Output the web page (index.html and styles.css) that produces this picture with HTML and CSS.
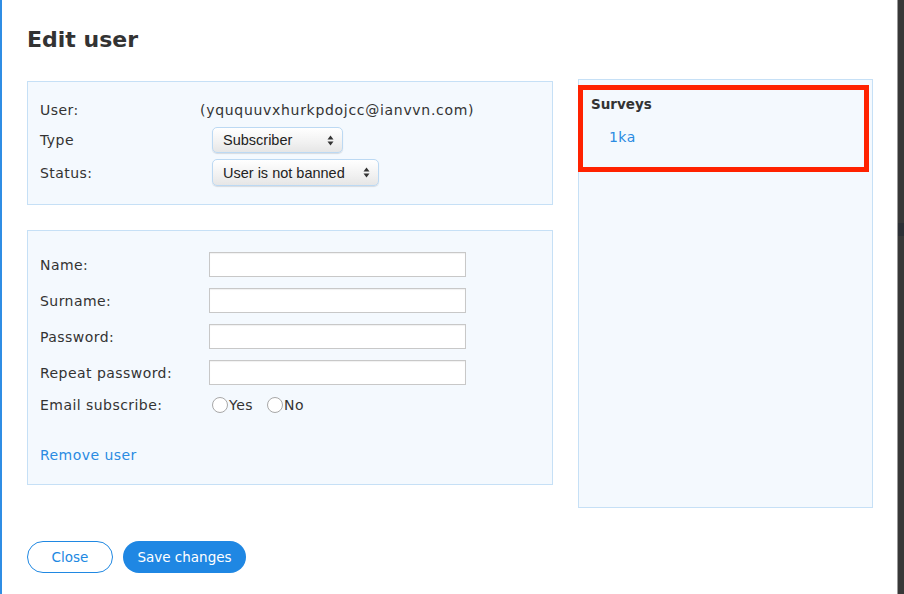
FILE: index.html
```html
<!DOCTYPE html>
<html>
<head>
<meta charset="utf-8">
<link rel="stylesheet" href="styles.css">
</head>
<body>
<div class="page">
  <div class="edge-left"></div>
  <main class="modal">
    <h1 class="title">Edit user</h1>
    <div class="columns">
      <div class="left">
        <section class="box box-info">
          <div class="row row-user">
            <span class="label">User:</span>
            <span class="value">(yququuvxhurkpdojcc@ianvvn.com)</span>
          </div>
          <div class="row row-type">
            <span class="label">Type</span>
            <span class="select sel-type">Subscriber<span class="arrows"><svg width="7" height="11" viewBox="0 0 7 11"><path d="M3.5 0.5L6.5 4.5H0.5Z" fill="#333"/><path d="M3.5 10.5L6.5 6.5H0.5Z" fill="#333"/></svg></span></span>
          </div>
          <div class="row row-status">
            <span class="label">Status:</span>
            <span class="select sel-status">User is not banned<span class="arrows"><svg width="7" height="11" viewBox="0 0 7 11"><path d="M3.5 0.5L6.5 4.5H0.5Z" fill="#333"/><path d="M3.5 10.5L6.5 6.5H0.5Z" fill="#333"/></svg></span></span>
          </div>
        </section>
        <section class="box box-form">
          <div class="frow"><span class="label">Name:</span><span class="input"></span></div>
          <div class="frow"><span class="label">Surname:</span><span class="input"></span></div>
          <div class="frow"><span class="label">Password:</span><span class="input"></span></div>
          <div class="frow"><span class="label">Repeat password:</span><span class="input"></span></div>
          <div class="frow frow-radio">
            <span class="label">Email subscribe:</span>
            <span class="radios">
              <span class="radio"></span><span class="rtext">Yes</span>
              <span class="radio radio-2"></span><span class="rtext">No</span>
            </span>
          </div>
          <a class="remove">Remove user</a>
        </section>
      </div>
      <aside class="box box-surveys">
        <div class="highlight">
          <div class="surveys-title">Surveys</div>
          <a class="survey-link">1ka</a>
        </div>
      </aside>
    </div>
    <div class="buttons">
      <span class="btn btn-close">Close</span>
      <span class="btn btn-save">Save changes</span>
    </div>
  </main>
  <div class="edge-right">
    <div class="edge-line"></div>
    <div class="edge-dark">
      <div class="dark-top"></div>
      <div class="dark-mid"></div>
      <div class="dark-bot"></div>
    </div>
  </div>
</div>
</body>
</html>
```

FILE: styles.css
```css
html, body {
  margin: 0;
  padding: 0;
  background: #ffffff;
}
body {
  font-family: "DejaVu Sans", "Liberation Sans", sans-serif;
  color: #333333;
  font-size: 14px;
  letter-spacing: 0.45px;
}
.page {
  display: flex;
  width: 904px;
  height: 594px;
  overflow: hidden;
}
.edge-left {
  width: 2px;
  background: #2f8de4;
  flex: none;
}
.modal {
  flex: 1;
  padding: 0 0 0 25px;
  display: flex;
  flex-direction: column;
}
.title {
  margin: 24px 0 0 0;
  font-size: 22px;
  font-weight: 700;
  letter-spacing: 0;
  line-height: 32px;
  color: #333;
  height: 32px;
}
.columns {
  display: flex;
  margin-top: 23px;
  align-items: flex-start;
}
.left {
  width: 526px;
  display: flex;
  flex-direction: column;
  gap: 25px;
  margin-top: 2px;
}
.box {
  box-sizing: border-box;
  background: #f4f9fe;
  border: 1px solid #c6e0f6;
}
.box-info {
  height: 124px;
  padding: 15px 12px 0 12px;
}
.row {
  display: flex;
  align-items: center;
}
.row-user { height: 26px; }
.row-type { height: 26px; margin-top: 4px; }
.row-status { height: 27px; margin-top: 6px; }
.label {
  width: 160px;
  flex: none;
  color: #333;
}
.row .label { width: 160px; }
.value { color: #333; letter-spacing: 0.7px; }
.select {
  margin-left: 12px;
  box-sizing: border-box;
  height: 100%;
  display: flex;
  align-items: center;
  justify-content: space-between;
  padding: 0 8px 0 10px;
  font-family: "Liberation Sans", Arial, sans-serif;
  font-size: 14.5px;
  letter-spacing: 0;
  color: #222;
  border-radius: 5px;
  border: 1px solid #bcd9f3;
  background: linear-gradient(#ffffff, #f1f1f1 60%, #e6e6e6);
  box-shadow: 0 1px 1px rgba(0,0,0,0.12);
}
.sel-type { width: 131px; }
.sel-status { width: 167px; }
.arrows { display: flex; align-items: center; }
.box-form {
  height: 255px;
  padding: 21px 12px 0 12px;
}
.frow {
  display: flex;
  align-items: center;
  height: 25px;
  margin-bottom: 11px;
}
.frow .label { width: 169px; }
.input {
  box-sizing: border-box;
  width: 257px;
  height: 25px;
  background: #fff;
  border: 1px solid #c8c8c8;
  box-shadow: inset 0 1px 1px rgba(0,0,0,0.06);
}
.frow-radio {
  height: 24px;
  margin-top: -3px;
}
.radios {
  display: flex;
  align-items: center;
  margin-left: 3px;
}
.radio {
  box-sizing: border-box;
  width: 16px;
  height: 16px;
  border-radius: 50%;
  border: 1px solid #a8a8a8;
  background: #fff;
  margin-right: 1px;
}
.radio-2 { margin-left: 14px; }
.rtext { color: #333; }
.remove {
  display: block;
  margin-top: 28px;
  color: #2a8be2;
  line-height: 20px;
}
.box-surveys {
  width: 295px;
  height: 429px;
  margin-left: 25px;
  padding: 5px 4px 0 0;
}
.highlight {
  box-sizing: border-box;
  width: 291px;
  height: 87px;
  border: 5px solid #ff2200;
  margin-left: -1px;
  padding: 5px 0 0 8px;
}
.surveys-title {
  font-weight: 700;
  font-size: 13.5px;
  letter-spacing: 0;
  color: #333;
  line-height: 18px;
}
.survey-link {
  display: block;
  margin: 14px 0 0 18px;
  color: #2a8be2;
  line-height: 20px;
}
.buttons {
  display: flex;
  gap: 10px;
  margin-top: 33px;
}
.btn {
  box-sizing: border-box;
  height: 32px;
  border-radius: 16px;
  display: flex;
  align-items: center;
  justify-content: center;
  font-size: 13.5px;
  letter-spacing: 0;
}
.btn-close {
  width: 86px;
  border: 1px solid #2088e2;
  color: #2088e2;
  background: #fff;
}
.btn-save {
  width: 123px;
  background: #1f87e3;
  color: #fff;
}
.edge-right {
  display: flex;
  flex: none;
  width: 7px;
}
.edge-line {
  width: 1px;
  background: #9a9a9a;
}
.edge-dark {
  flex: 1;
  background: #383838;
  display: flex;
  flex-direction: column;
}
.dark-top { height: 103px; }
.dark-mid {
  margin-top: 120px;
  height: 13px;
  background: #2c2f35;
}
.dark-bot { flex: 1; }
```
